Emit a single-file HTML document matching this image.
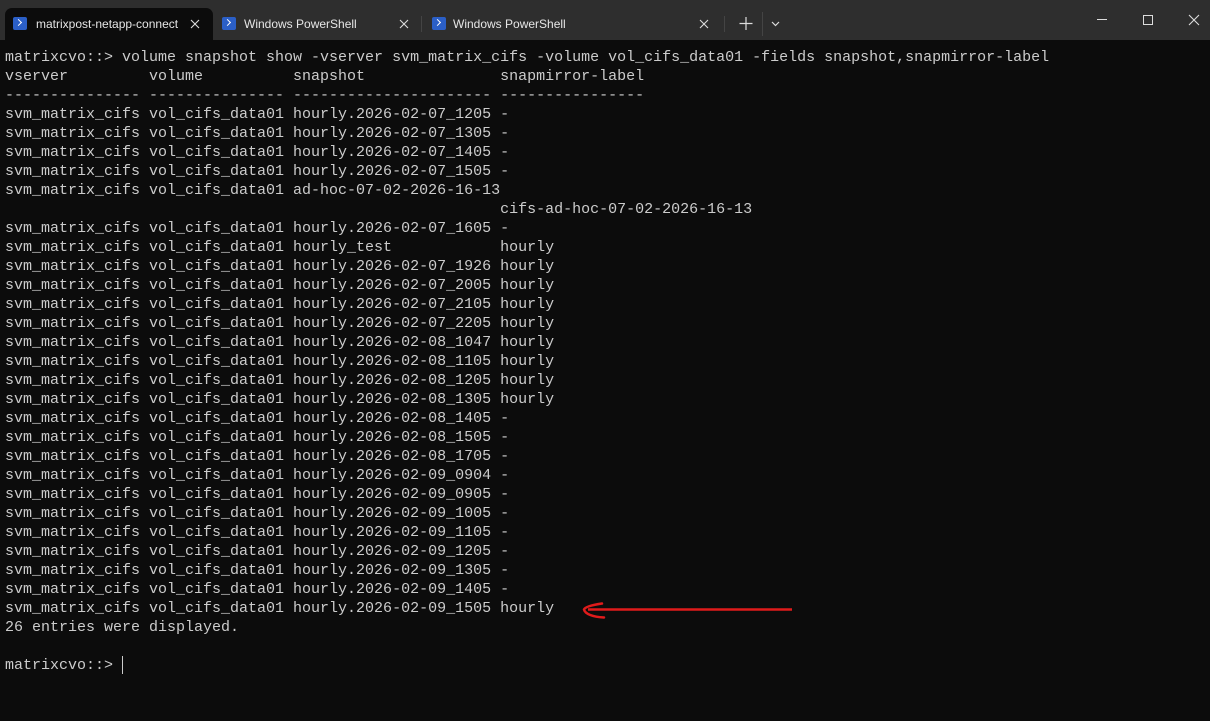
<!DOCTYPE html>
<html><head><meta charset="utf-8"><style>
html,body{margin:0;padding:0;width:1210px;height:721px;overflow:hidden;background:#0c0c0c}
.bar{position:absolute;left:0;top:0;width:1210px;height:40px;background:#2e2e2e}
.act{position:absolute;left:5px;top:8px;width:208px;height:32px;background:#0c0c0c;border-radius:7px 7px 0 0}
.t{position:absolute;top:17px;white-space:nowrap;font:12px "Liberation Sans",sans-serif;color:#e6e6e6}
.ico{position:absolute;top:17px;width:14px;height:13px;background:#2b5fc7;border-radius:2px}
.ico:after{content:"";position:absolute;left:3px;top:3px;width:4px;height:4px;border-right:1.5px solid #fff;border-bottom:1.5px solid #fff;transform:rotate(-45deg)}
pre{position:absolute;left:5px;top:48px;margin:0;font:15px/19px "Liberation Mono",monospace;color:#cccccc}
.sep{position:absolute;width:1px;background:#444}
</style></head><body>
<div class="bar"></div>
<div class="act"></div>
<div class="ico" style="left:13px"></div><span class="t" style="left:36px;width:142px;overflow:hidden">matrixpost-netapp-connector</span>
<div class="ico" style="left:222px"></div><span class="t" style="left:244px">Windows PowerShell</span>
<div class="sep" style="left:421px;top:16px;height:16px"></div>
<div class="ico" style="left:432px"></div><span class="t" style="left:453px">Windows PowerShell</span>
<div class="sep" style="left:724px;top:16px;height:16px"></div>
<div class="sep" style="left:762px;top:12px;height:24px"></div>
<svg style="position:absolute;left:0;top:0" width="1210" height="40">
<path d="M191 20l8 8M199 20l-8 8M400 20l8 8M408 20l-8 8M700 20l8 8M708 20l-8 8" stroke="#ddd" stroke-width="1.1"/>
<path d="M746 17v13M739.5 23.5h13" stroke="#ddd" stroke-width="1.2"/>
<path d="M772 22l3.5 3.5 3.5-3.5" stroke="#ddd" stroke-width="1.2" fill="none"/>
<path d="M1097 19.5h10" stroke="#ddd" stroke-width="1"/>
<rect x="1143.5" y="15.5" width="9" height="9" stroke="#ddd" fill="none"/>
<path d="M1189 15l10 10M1199 15l-10 10" stroke="#ddd" stroke-width="1.1"/>
</svg>
<pre>matrixcvo::&gt; volume snapshot show -vserver svm_matrix_cifs -volume vol_cifs_data01 -fields snapshot,snapmirror-label
vserver         volume          snapshot               snapmirror-label
--------------- --------------- ---------------------- ----------------
svm_matrix_cifs vol_cifs_data01 hourly.2026-02-07_1205 -
svm_matrix_cifs vol_cifs_data01 hourly.2026-02-07_1305 -
svm_matrix_cifs vol_cifs_data01 hourly.2026-02-07_1405 -
svm_matrix_cifs vol_cifs_data01 hourly.2026-02-07_1505 -
svm_matrix_cifs vol_cifs_data01 ad-hoc-07-02-2026-16-13
                                                       cifs-ad-hoc-07-02-2026-16-13
svm_matrix_cifs vol_cifs_data01 hourly.2026-02-07_1605 -
svm_matrix_cifs vol_cifs_data01 hourly_test            hourly
svm_matrix_cifs vol_cifs_data01 hourly.2026-02-07_1926 hourly
svm_matrix_cifs vol_cifs_data01 hourly.2026-02-07_2005 hourly
svm_matrix_cifs vol_cifs_data01 hourly.2026-02-07_2105 hourly
svm_matrix_cifs vol_cifs_data01 hourly.2026-02-07_2205 hourly
svm_matrix_cifs vol_cifs_data01 hourly.2026-02-08_1047 hourly
svm_matrix_cifs vol_cifs_data01 hourly.2026-02-08_1105 hourly
svm_matrix_cifs vol_cifs_data01 hourly.2026-02-08_1205 hourly
svm_matrix_cifs vol_cifs_data01 hourly.2026-02-08_1305 hourly
svm_matrix_cifs vol_cifs_data01 hourly.2026-02-08_1405 -
svm_matrix_cifs vol_cifs_data01 hourly.2026-02-08_1505 -
svm_matrix_cifs vol_cifs_data01 hourly.2026-02-08_1705 -
svm_matrix_cifs vol_cifs_data01 hourly.2026-02-09_0904 -
svm_matrix_cifs vol_cifs_data01 hourly.2026-02-09_0905 -
svm_matrix_cifs vol_cifs_data01 hourly.2026-02-09_1005 -
svm_matrix_cifs vol_cifs_data01 hourly.2026-02-09_1105 -
svm_matrix_cifs vol_cifs_data01 hourly.2026-02-09_1205 -
svm_matrix_cifs vol_cifs_data01 hourly.2026-02-09_1305 -
svm_matrix_cifs vol_cifs_data01 hourly.2026-02-09_1405 -
svm_matrix_cifs vol_cifs_data01 hourly.2026-02-09_1505 hourly
26 entries were displayed.

matrixcvo::&gt; </pre>
<div style="position:absolute;left:122px;top:656px;width:1px;height:18px;background:#ccc"></div>
<svg style="position:absolute;left:0;top:0" width="1210" height="721">
<path d="M588 609.5H792" stroke="#e01b1b" stroke-width="2.5" fill="none"/>
<path d="M602 603.5C592 605 585 607 584 609.5C585 614 593 617 604 617.5" stroke="#e01b1b" stroke-width="2.5" fill="none" stroke-linecap="round"/>
</svg>
</body></html>
